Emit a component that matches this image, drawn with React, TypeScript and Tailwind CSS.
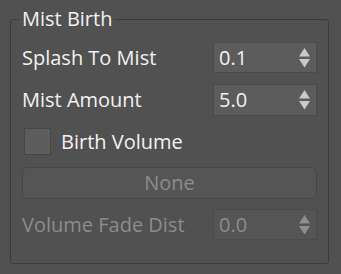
import React from "react";

const font = { fontFamily: '"Open Sans", "Noto Sans", sans-serif' };

function Arrows({ disabled }: { disabled?: boolean }) {
  const c = disabled ? "#8e8e8e" : "#c9c9c9";
  return (
    <svg width="11" height="20" viewBox="0 0 11 20" aria-hidden>
      <path d="M5.5 0 L11 8.5 L0 8.5 Z" fill={c} />
      <path d="M0 11 L11 11 L5.5 19.5 Z" fill={c} />
    </svg>
  );
}

function Spinner({ value, disabled }: { value: string; disabled?: boolean }) {
  return (
    <div
      className={`flex h-full w-[104px] shrink-0 items-center justify-between border pl-[5px] pr-[6px] ${
        disabled ? "border-[#4b4b4b] bg-[#555555] text-[#8c8c8c]" : "border-[#4a4a4a] bg-[#5c5c5c] text-[#f2f2f2]"
      }`}
    >
      <span>{value}</span>
      <Arrows disabled={disabled} />
    </div>
  );
}

function Row({ label, value, disabled, className }: { label: string; value: string; disabled?: boolean; className: string }) {
  return (
    <div className={`flex items-center justify-between ${className}`}>
      <span className={disabled ? "text-[#8c8c8c]" : "text-[#f2f2f2]"}>{label}</span>
      <Spinner value={value} disabled={disabled} />
    </div>
  );
}

export default function App() {
  return (
    <div className="h-[274px] w-[341px] overflow-hidden bg-[#515151] pt-[7px] text-[20px] leading-[24px]" style={font}>
      <fieldset className="ml-[10px] mr-[12px] rounded-[3px] border border-[#3c3c3c] pl-[11px] pr-[11px] pb-[23px]">
        <legend className="-ml-[3px] px-[3px] text-[#f2f2f2]">Mist Birth</legend>
        <Row label="Splash To Mist" value="0.1" className="mt-[11px] h-[31px]" />
        <Row label="Mist Amount" value="5.0" className="mt-[11px] h-[32px]" />
        <div className="mt-[12px] flex h-[27px] items-center gap-[10px] pl-[2px]">
          <div className="h-[27px] w-[27px] border border-[#474747] bg-[#5d5d5d]" />
          <span className="text-[#f2f2f2]">Birth Volume</span>
        </div>
        <div className="mt-[12px] flex h-[32px] items-center justify-center rounded-[5px] border border-[#464646] bg-[#555555] text-[#8c8c8c]">
          None
        </div>
        <Row label="Volume Fade Dist" value="0.0" disabled className="mt-[10px] h-[31px]" />
      </fieldset>
    </div>
  );
}
